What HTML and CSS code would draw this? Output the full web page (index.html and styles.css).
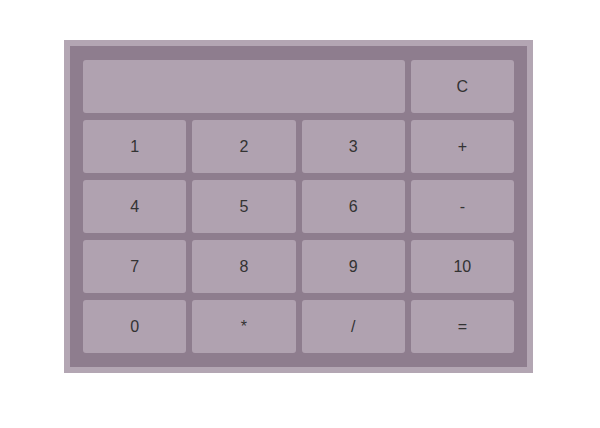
FILE: index.html
```html
<!DOCTYPE html>
<html>
<head>
<meta charset="utf-8">
<link rel="stylesheet" href="styles.css">
</head>
<body>
<div class="calc">
  <div class="display"></div>
  <button class="key">C</button>
  <button class="key">1</button>
  <button class="key">2</button>
  <button class="key">3</button>
  <button class="key">+</button>
  <button class="key">4</button>
  <button class="key">5</button>
  <button class="key">6</button>
  <button class="key">-</button>
  <button class="key">7</button>
  <button class="key">8</button>
  <button class="key">9</button>
  <button class="key">10</button>
  <button class="key">0</button>
  <button class="key">*</button>
  <button class="key">/</button>
  <button class="key">=</button>
</div>
</body>
</html>
```
FILE: styles.css
```css
html, body {
  margin: 0;
  padding: 0;
  background: #ffffff;
}
.calc {
  box-sizing: border-box;
  width: 469px;
  height: 333px;
  margin: 40px 0 0 64px;
  border: 6px solid #b3a6b3;
  background: #8e7d8e;
  padding: 14px 13px 13px 13px;
  display: grid;
  grid-template-columns: repeat(4, 1fr);
  grid-template-rows: repeat(5, 53px);
  column-gap: 6px;
  row-gap: 7px;
}
.display {
  grid-column: 1 / span 3;
  background: #b0a2b0;
  border-radius: 3px;
}
.key {
  border: none;
  border-radius: 3px;
  background: #b0a2b0;
  color: #333333;
  font-family: "Liberation Sans", Arial, sans-serif;
  font-size: 16px;
  padding: 0;
  margin: 0;
}
```
